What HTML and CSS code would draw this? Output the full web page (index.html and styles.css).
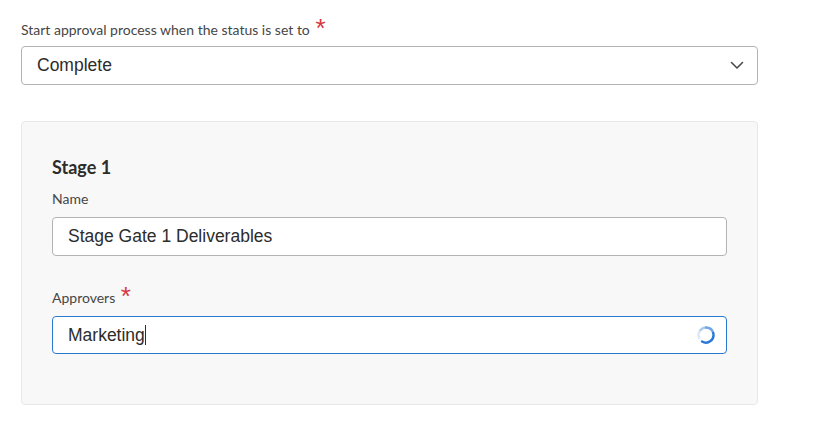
FILE: index.html
```html
<!DOCTYPE html>
<html>
<head>
<meta charset="utf-8">
<link rel="stylesheet" href="styles.css">
</head>
<body>
<div class="page">
  <div class="field top">
    <label class="label">Start approval process when the status is set to <span class="req">*</span></label>
    <div class="select">
      <span class="value">Complete</span>
      <svg class="chev" width="14" height="9" viewBox="0 0 14 9"><path d="M1.5 1.5 L7 7 L12.5 1.5" fill="none" stroke="#4b4b4b" stroke-width="1.6" stroke-linecap="round" stroke-linejoin="round"/></svg>
    </div>
  </div>
  <div class="card">
    <h2 class="stage">Stage 1</h2>
    <div class="field">
      <label class="label">Name</label>
      <div class="input"><span class="value">Stage Gate 1 Deliverables</span></div>
    </div>
    <div class="field approvers">
      <label class="label">Approvers <span class="req">*</span></label>
      <div class="input focus"><span class="value">Marketing</span><span class="caret"></span>
        <svg class="spin" width="20" height="20" viewBox="0 0 20 20">
          <path d="M3.2 13.2 A7.5 7.5 0 0 1 4.5 5" fill="none" stroke="#dbe8f8" stroke-width="2.4" stroke-linecap="round"/>
          <path d="M4.5 5 A7.5 7.5 0 0 1 10 2.5" fill="none" stroke="#a9c9ef" stroke-width="2.4" stroke-linecap="round"/>
          <path d="M10 2.5 A7.5 7.5 0 0 1 17.2 8" fill="none" stroke="#6ea6e8" stroke-width="2.4" stroke-linecap="round"/>
          <path d="M17.2 8 A7.5 7.5 0 0 1 6 16.4" fill="none" stroke="#2b78d8" stroke-width="2.4" stroke-linecap="round"/>
        </svg>
      </div>
    </div>
  </div>
</div>
</body>
</html>
```
FILE: styles.css
```css
html, body { margin: 0; padding: 0; background: #fff; }
body { font-family: "Lato", "Open Sans", sans-serif; color: #2c2c2c; }
.page { padding: 16px 0 0 21px; width: 737px; }
.field { display: flex; flex-direction: column; }
.label { font-family: "Lato", "Open Sans", sans-serif; font-size: 14px; color: #464646; line-height: 17px; margin-bottom: 8px; padding-top: 5px; }
.req { color: #d7373f; font-size: 26px; font-family: "Liberation Sans", sans-serif; position: relative; top: 2px; line-height: 0; margin-left: 2px; }
.select, .input {
  display: flex; align-items: center; box-sizing: border-box;
  height: 39px; border: 1px solid #b3b3b3; border-radius: 4px; background: #fff;
  padding: 0 10px 0 15px;
  font-family: "Liberation Sans", Arial, sans-serif; font-size: 17.5px; color: #2c2c2c;
}
.select { justify-content: space-between; padding-right: 13px; }
.card {
  margin-top: 36px; box-sizing: border-box; height: 284px;
  background: #f8f8f8; border: 1px solid #e8e8e8; border-radius: 4px;
  padding: 34px 30px 0 30px; width: 737px;
}
.card .field { width: 675px; }
.stage { margin: 0 0 12px 0; font-family: "Lato", sans-serif; font-weight: 700; font-size: 18px; color: #2c2c2c; line-height: 22px; }
.card .label { margin-bottom: 10px; padding-top: 0; }
.approvers { margin-top: 33px; }
.approvers .input { height: 38px; }
.input.focus { border-color: #2b78d0; }
.caret { width: 1px; height: 20px; background: #2c2c2c; }
.spin { margin-left: auto; }
```
